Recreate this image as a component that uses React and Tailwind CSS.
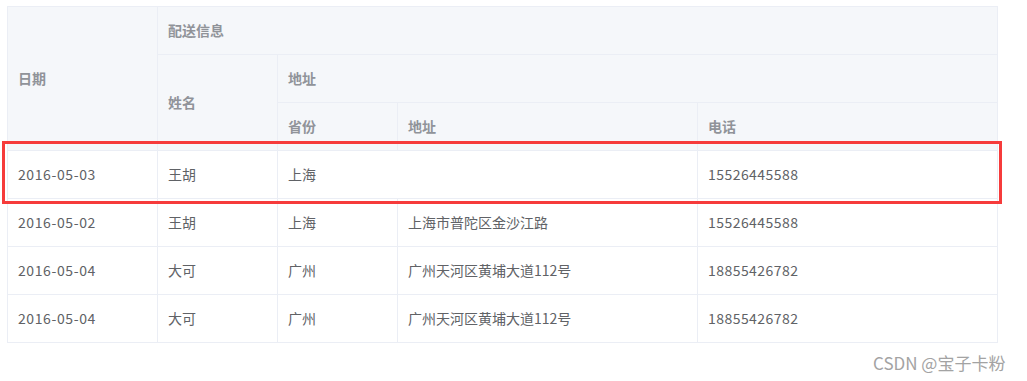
export default function App() {
  const rows = [
    { date: "2016-05-03", name: "王胡", province: "上海", address: null, phone: "15526445588" },
    { date: "2016-05-02", name: "王胡", province: "上海", address: "上海市普陀区金沙江路", phone: "15526445588" },
    { date: "2016-05-04", name: "大可", province: "广州", address: "广州天河区黄埔大道112号", phone: "18855426782" },
    { date: "2016-05-04", name: "大可", province: "广州", address: "广州天河区黄埔大道112号", phone: "18855426782" },
  ];
  const th = "border-r border-b border-[#ebeef5] bg-[#f5f7fa] px-[10px] py-[12px] text-left align-middle font-bold text-[#909399] leading-[23px]";
  const td = "border-r border-b border-[#ebeef5] px-[10px] py-[12px] text-left align-middle text-[#606266] leading-[23px]";
  return (
    <div
      className="relative h-[381px] w-[1027px] bg-white"
      style={{ fontFamily: '"Noto Sans CJK SC", "Noto Sans", sans-serif' }}
    >
      <div className="pl-[7px] pt-[6px]">
        <table className="w-[991px] table-fixed border-separate border-spacing-0 border-l border-t border-[#ebeef5] text-[14px]">
          <colgroup>
            <col className="w-[150px]" />
            <col className="w-[120px]" />
            <col className="w-[120px]" />
            <col className="w-[300px]" />
            <col className="w-[300px]" />
          </colgroup>
          <thead>
            <tr>
              <th rowSpan={3} className={th}>日期</th>
              <th colSpan={4} className={th}>配送信息</th>
            </tr>
            <tr>
              <th rowSpan={2} className={th}>姓名</th>
              <th colSpan={3} className={th}>地址</th>
            </tr>
            <tr>
              <th className={th}>省份</th>
              <th className={th}>地址</th>
              <th className={th}>电话</th>
            </tr>
          </thead>
          <tbody>
            {rows.map((r, i) => (
              <tr key={i}>
                <td className={`${td} tracking-[0.6px]`}>{r.date}</td>
                <td className={td}>{r.name}</td>
                {r.address === null ? (
                  <td colSpan={2} className={td}>{r.province}</td>
                ) : (
                  <>
                    <td className={td}>{r.province}</td>
                    <td className={td}>{r.address}</td>
                  </>
                )}
                <td className={`${td} tracking-[0.45px]`}>{r.phone}</td>
              </tr>
            ))}
          </tbody>
        </table>
      </div>
      <div className="pointer-events-none absolute left-[2px] top-[141px] h-[63px] w-[1000px] border-[3px] border-[#f63b3b]" />
      <div className="absolute left-[873px] top-[351px] text-[17px] leading-[24px] text-[#a3a3a3]">
        CSDN @宝子卡粉
      </div>
    </div>
  );
}
